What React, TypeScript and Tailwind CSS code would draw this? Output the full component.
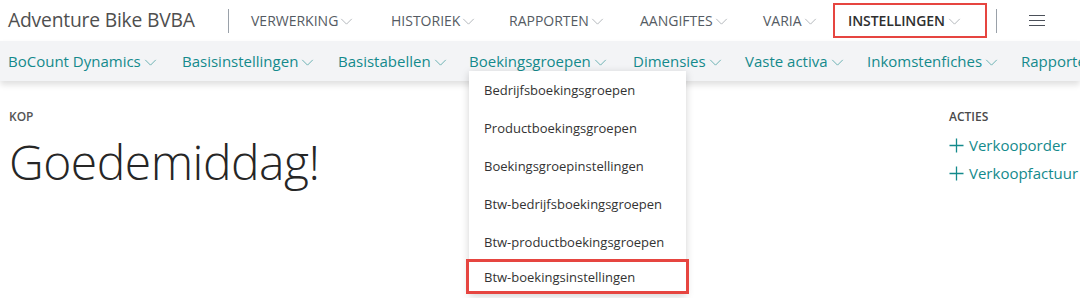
const topMenu = [
  { label: "VERWERKING", w: "w-[140px]" },
  { label: "HISTORIEK", w: "w-[118px]" },
  { label: "RAPPORTEN", w: "w-[131px]" },
  { label: "AANGIFTES", w: "w-[123px]" },
  { label: "VARIA", w: "w-[70px]" },
];

const subMenu = [
  { label: "BoCount Dynamics", w: "w-[174px]" },
  { label: "Basisinstellingen", w: "w-[156px]" },
  { label: "Basistabellen", w: "w-[131px]" },
  { label: "Boekingsgroepen", w: "w-[164px]" },
  { label: "Dimensies", w: "w-[112px]" },
  { label: "Vaste activa", w: "w-[122px]" },
  { label: "Inkomstenfiches", w: "w-[154px]" },
  { label: "Rapporten", w: "w-[120px]" },
];

const dropdownItems = [
  "Bedrijfsboekingsgroepen",
  "Productboekingsgroepen",
  "Boekingsgroepinstellingen",
  "Btw-bedrijfsboekingsgroepen",
  "Btw-productboekingsgroepen",
];

function Chevron({ className }: { className: string }) {
  return (
    <svg className={className} viewBox="0 0 14 8" fill="none" stroke="currentColor" strokeWidth={1}>
      <path d="M1 1 L7 7 L13 1" />
    </svg>
  );
}

function PlusIcon() {
  return (
    <svg className="mr-[5px] h-[15px] w-[15px] shrink-0" viewBox="0 0 15 15" fill="none" stroke="currentColor" strokeWidth={1.3}>
      <path d="M7.5 0.5 V14.5 M0.5 7.5 H14.5" />
    </svg>
  );
}

export default function App() {
  return (
    <div className="relative h-[298px] w-[1080px] overflow-hidden bg-white font-['Open_Sans',sans-serif]">
      {/* Top bar */}
      <div className="flex h-[41px] items-center pl-2">
        <span className="w-[220px] text-[19.3px] tracking-[-0.2px] text-[#4f4f4f]">Adventure Bike BVBA</span>
        <div className="h-[24px] w-px bg-[#9aa1a9]" />
        <nav className="ml-[22px] flex items-center">
          {topMenu.map((item) => (
            <span key={item.label} className={`${item.w} flex shrink-0 items-center text-[14px] text-[#555b63]`}>
              {item.label}
              <Chevron className="ml-[2px] mt-[1px] h-[7px] w-[13px] text-[#a9aeb4]" />
            </span>
          ))}
          <span className="flex h-[35px] w-[154px] shrink-0 items-center border-2 border-[#e64540] pl-[13px] text-[14px] font-semibold tracking-[-0.1px] text-[#2f2f2f]">
            INSTELLINGEN
            <Chevron className="ml-[3px] mt-[1px] h-[7px] w-[13px] text-[#a9aeb4]" />
          </span>
        </nav>
        <div className="ml-[9px] h-[24px] w-px bg-[#9aa1a9]" />
        <div className="ml-[32px] flex flex-col gap-[3.5px]">
          <div className="h-[1.5px] w-[16px] bg-[#4b5059]" />
          <div className="h-[1.5px] w-[16px] bg-[#4b5059]" />
          <div className="h-[1.5px] w-[16px] bg-[#4b5059]" />
        </div>
      </div>

      {/* Sub bar */}
      <div className="flex h-[40px] items-center whitespace-nowrap bg-[#f3f4f6] pl-2 shadow-[0_4px_6px_rgba(0,0,0,0.12)]">
        {subMenu.map((item) => (
          <span key={item.label} className={`${item.w} flex shrink-0 items-center text-[15px] text-[#148a8c]`}>
            {item.label}
            <Chevron className="ml-[3px] mt-[2px] h-[7px] w-[13px] text-[#5aa9aa]" />
          </span>
        ))}
      </div>

      {/* Content */}
      <div className="flex pl-[9px] pt-[29px]">
        <div className="flex-1">
          <div className="text-[12px] font-semibold leading-[14px] text-[#555]">KOP</div>
          <div className="mt-[10px] text-[48px] font-light leading-[56px] tracking-[-0.5px] text-[#262626]">
            Goedemiddag!
          </div>
        </div>
        <div className="w-[131px]">
          <div className="text-[12px] font-semibold leading-[14px] text-[#4a4a4a]">ACTIES</div>
          <div className="mt-[11px] flex items-center text-[15px] leading-[20px] text-[#148a8c]">
            <PlusIcon />
            Verkooporder
          </div>
          <div className="mt-[8px] flex items-center text-[15px] leading-[20px] text-[#148a8c]">
            <PlusIcon />
            Verkoopfactuur
          </div>
        </div>
      </div>

      {/* Dropdown */}
      <div className="absolute left-[469px] top-[71px] w-[217px] bg-white pt-[1px] shadow-[0_2px_8px_rgba(0,0,0,0.18)]">
        {dropdownItems.map((item) => (
          <div key={item} className="flex h-[38px] items-center px-[15px] text-[13px] text-[#333]">
            {item}
          </div>
        ))}
        <div className="mx-[-3px] mt-[-3px] flex h-[35px] items-center border-[3px] border-[#e64540] px-[15px] pt-[3px] text-[13px] text-[#333]">
          Btw-boekingsinstellingen
        </div>
      </div>
    </div>
  );
}
